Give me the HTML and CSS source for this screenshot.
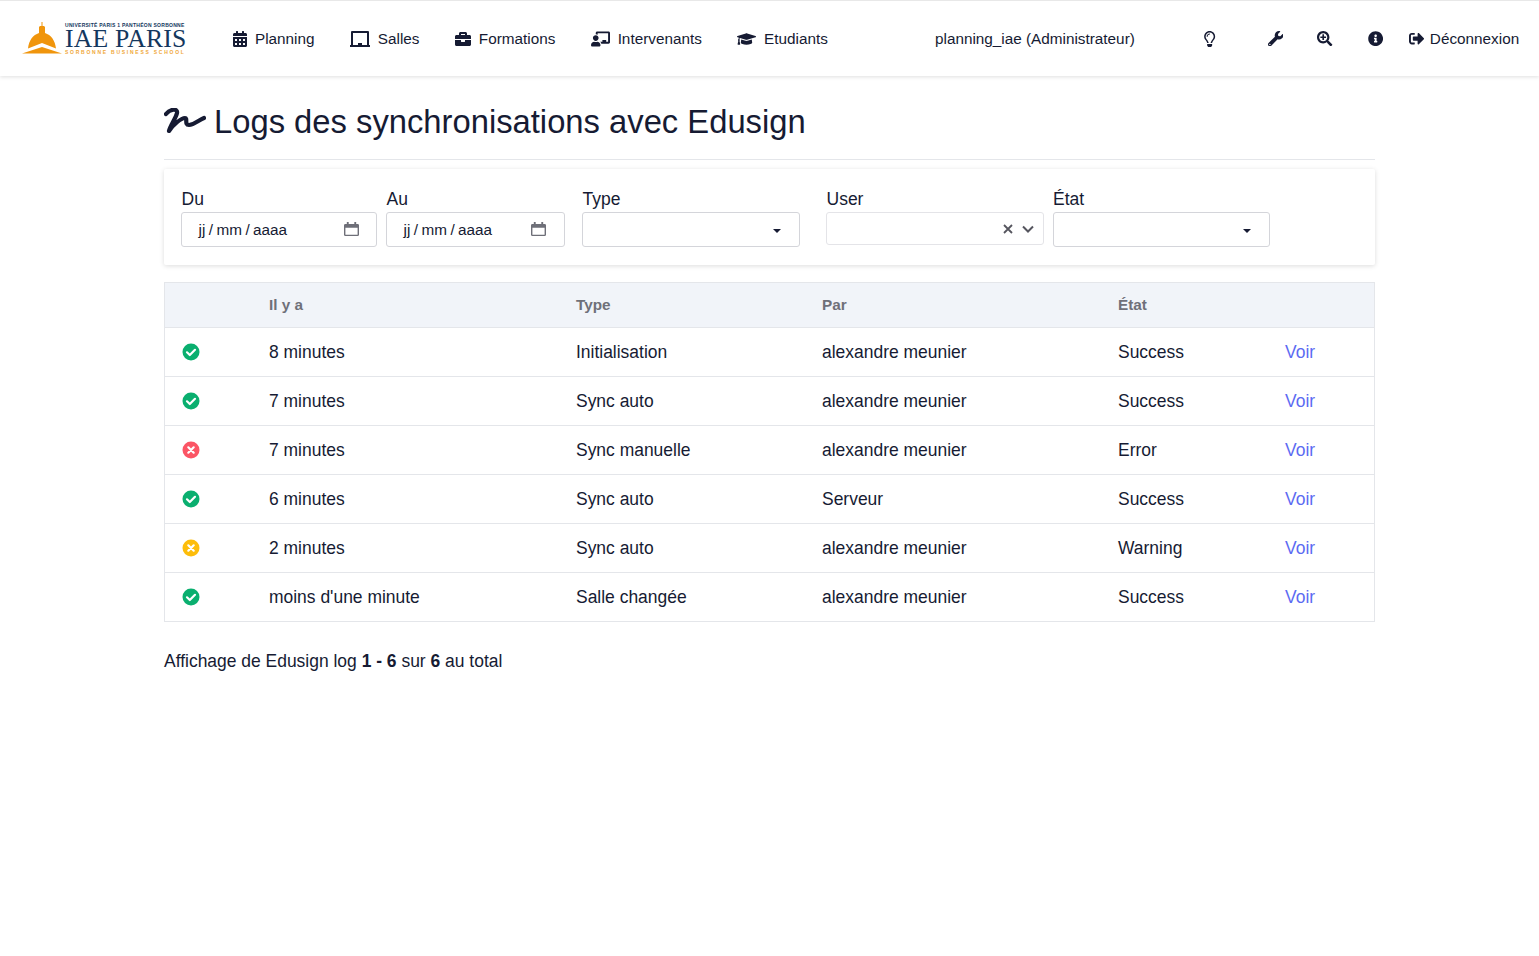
FILE: index.html
```html
<!DOCTYPE html>
<html lang="fr">
<head>
    <meta charset="UTF-8">
    <title>Logs des synchronisations avec Edusign</title>
    <link rel="stylesheet" href="styles.css">
</head>
<body>
    <nav class="navbar">
        <a class="brand" href="#">
            <svg class="brand-dome" viewBox="0 0 40 32">
                <path fill="#f0950c" d="M19.500 0h1v4h1.500l1 1v6c6 2 10 7 11 15.500L20 21 6 26.500C7 18 11 13 17 11V5l1-1h1.500z"/>
                <path fill="#f0950c" d="M0 31.500 20 25l20 6.500z"/>
            </svg>
            <span class="brand-text">
                <span class="brand-top">UNIVERSITÉ PARIS 1 PANTHÉON SORBONNE</span>
                <span class="brand-name">IAE PARIS</span>
                <span class="brand-sub">SORBONNE BUSINESS SCHOOL</span>
            </span>
        </a>
        <div class="nav-main">
            <a class="nav-item" href="#">
                <svg class="ico" viewBox="0 0 448 512"><path d="M0 464c0 26.500 21.500 48 48 48h352c26.500 0 48-21.500 48-48V192H0v272zm320-196c0-6.600 5.400-12 12-12h40c6.600 0 12 5.400 12 12v40c0 6.600-5.400 12-12 12h-40c-6.600 0-12-5.400-12-12v-40zm0 128c0-6.600 5.400-12 12-12h40c6.600 0 12 5.400 12 12v40c0 6.600-5.400 12-12 12h-40c-6.600 0-12-5.400-12-12v-40zM192 268c0-6.600 5.400-12 12-12h40c6.600 0 12 5.400 12 12v40c0 6.600-5.400 12-12 12h-40c-6.600 0-12-5.400-12-12v-40zm0 128c0-6.600 5.400-12 12-12h40c6.600 0 12 5.400 12 12v40c0 6.600-5.400 12-12 12h-40c-6.600 0-12-5.400-12-12v-40zM64 268c0-6.600 5.400-12 12-12h40c6.600 0 12 5.400 12 12v40c0 6.600-5.400 12-12 12H76c-6.600 0-12-5.400-12-12v-40zm0 128c0-6.600 5.400-12 12-12h40c6.600 0 12 5.400 12 12v40c0 6.600-5.400 12-12 12H76c-6.600 0-12-5.400-12-12v-40zM400 64h-48V16c0-8.800-7.200-16-16-16h-32c-8.800 0-16 7.200-16 16v48H160V16c0-8.800-7.200-16-16-16h-32c-8.800 0-16 7.200-16 16v48H48C21.500 64 0 85.500 0 112v48h448v-48c0-26.500-21.500-48-48-48z"/></svg>
                Planning
            </a>
            <a class="nav-item" href="#">
                <svg class="ico ico-board" viewBox="0 0 20 16"><path d="M2 0h16a1 1 0 0 1 1 1v13h1v2H0v-2h1V1a1 1 0 0 1 1-1zm1 2v12h5v-2h4v2h5V2H3z"/></svg>
                Salles
            </a>
            <a class="nav-item" href="#">
                <svg class="ico ico-case" viewBox="0 0 512 512"><path d="M320 336c0 8.840-7.160 16-16 16h-96c-8.840 0-16-7.160-16-16v-48H0v144c0 25.600 22.400 48 48 48h416c25.600 0 48-22.400 48-48V288H320v48zm144-208h-80V80c0-25.600-22.400-48-48-48H176c-25.600 0-48 22.400-48 48v48H48c-25.600 0-48 22.400-48 48v80h512v-80c0-25.600-22.400-48-48-48zm-144 0H192V96h128v32z"/></svg>
                Formations
            </a>
            <a class="nav-item" href="#">
                <svg class="ico ico-wide" viewBox="0 0 640 512"><path d="M208 352c-2.390 0-4.780.35-7.060 1.090C187.980 357.300 174.350 360 160 360c-14.350 0-27.980-2.700-40.950-6.910-2.280-.74-4.660-1.090-7.050-1.090C49.940 352-.33 402.480 0 464.620.14 490.880 21.730 512 48 512h224c26.270 0 47.860-21.120 48-47.380.33-62.140-49.940-112.620-112-112.620zm-48-32c53.020 0 96-42.980 96-96s-42.980-96-96-96-96 42.980-96 96 42.980 96 96 96zM592 0H208c-26.470 0-48 22.250-48 49.590V96c23.420 0 45.100 6.780 64 17.800V64h352v288h-64v-64H384v64h-76.240c19.100 16.690 33.120 38.730 39.690 64H592c26.470 0 48-22.250 48-49.590V49.590C640 22.250 618.470 0 592 0z"/></svg>
                Intervenants
            </a>
            <a class="nav-item" href="#">
                <svg class="ico ico-wide" viewBox="0 0 640 512"><path d="M622.340 153.200 343.490 67.520c-15.160-4.670-31.820-4.670-46.990 0L17.660 153.200c-23.540 7.230-23.540 38.360 0 45.590l48.610 14.940c-10.670 13.190-17.230 29.280-17.880 46.900C38.780 266.150 32 276.110 32 288c0 10.780 5.680 19.850 13.860 25.650L20.330 428.530C18.110 438.520 25.710 448 35.940 448h56.110c10.240 0 17.840-9.480 15.620-19.470L82.140 313.650C90.320 307.850 96 298.780 96 288c0-11.570-6.470-21.250-15.660-26.870.76-15.020 8.440-28.300 20.690-36.720L296.500 284.500c9.060 2.780 26.440 6.250 46.990 0l278.860-85.700c23.550-7.240 23.550-38.360-.01-45.600zM352.790 315.090c-28.530 8.760-52.840 3.920-65.590 0l-145.020-44.550L128 384c0 35.350 85.960 64 192 64s192-28.650 192-64l-14.180-113.470-145.030 44.560z"/></svg>
                Etudiants
            </a>
        </div>
        <div class="nav-user">planning_iae (Administrateur)</div>
        <div class="nav-end">
            <a class="nav-icon nav-bulb" href="#">
                <svg class="ico" viewBox="0 0 352 512"><path d="M176 80c-52.940 0-96 43.060-96 96 0 8.840 7.160 16 16 16s16-7.160 16-16c0-35.300 28.720-64 64-64 8.840 0 16-7.160 16-16s-7.160-16-16-16zM96.060 459.170c0 3.150.93 6.220 2.680 8.840l24.510 36.840c2.970 4.460 7.970 7.140 13.320 7.140h78.850c5.360 0 10.360-2.680 13.320-7.140l24.510-36.840c1.740-2.620 2.670-5.700 2.680-8.840l.05-43.180H96.020l.04 43.180zM176 0C73.720 0 0 82.970 0 176c0 44.370 16.450 84.850 43.560 115.780 16.640 18.990 42.740 58.800 52.420 92.160v.06h48v-.12c-.01-4.770-.72-9.510-2.150-14.070-5.590-17.810-22.82-64.770-62.170-109.670-20.540-23.430-31.520-53.150-31.610-84.140-.2-73.640 59.670-128 127.950-128 70.580 0 128 57.420 128 128 0 30.970-11.240 60.850-31.650 84.140-39.110 44.610-56.420 91.470-62.100 109.460-1.460 4.620-2.190 9.410-2.200 14.200v.2h48v-.05c9.680-33.370 35.780-73.180 52.420-92.160C335.550 260.850 352 220.370 352 176 352 78.800 273.200 0 176 0z"/></svg>
            </a>
            <a class="nav-icon nav-wrench" href="#">
                <svg class="ico" viewBox="0 0 512 512"><path d="M507.730 109.100c-2.240-9.030-13.540-12.090-20.120-5.510l-74.360 74.360-67.880-11.310-11.310-67.880 74.360-74.360c6.620-6.620 3.430-17.900-5.660-20.160-47.380-11.740-99.550.91-136.580 37.930-39.640 39.640-50.550 97.100-34.050 147.200L18.740 402.760c-24.990 24.990-24.990 65.510 0 90.500 24.990 24.990 65.510 24.990 90.500 0l213.210-213.210c50.120 16.710 107.470 5.680 147.370-34.220 37.070-37.070 49.700-89.320 37.910-136.730zM64 472c-13.250 0-24-10.750-24-24 0-13.260 10.750-24 24-24s24 10.740 24 24c0 13.250-10.750 24-24 24z"/></svg>
            </a>
            <a class="nav-icon nav-zoom" href="#">
                <svg class="ico" viewBox="0 0 512 512"><path d="M304 192v32c0 6.600-5.400 12-12 12h-56v56c0 6.600-5.400 12-12 12h-32c-6.600 0-12-5.400-12-12v-56h-56c-6.600 0-12-5.400-12-12v-32c0-6.600 5.400-12 12-12h56v-56c0-6.600 5.400-12 12-12h32c6.600 0 12 5.400 12 12v56h56c6.600 0 12 5.400 12 12zm201 284.700L476.700 505c-9.400 9.400-24.600 9.400-33.900 0L343 405.300c-4.500-4.500-7-10.600-7-17V372c-35.300 27.600-79.700 44-128 44C93.100 416 0 322.900 0 208S93.100 0 208 0s208 93.100 208 208c0 48.300-16.400 92.700-44 128h16.300c6.400 0 12.500 2.500 17 7l99.700 99.700c9.300 9.400 9.300 24.600 0 34zM344 208c0-75.200-60.800-136-136-136S72 132.800 72 208s60.800 136 136 136 136-60.800 136-136z"/></svg>
            </a>
            <a class="nav-icon nav-info" href="#">
                <svg class="ico" viewBox="0 0 512 512"><path d="M256 8C119.040 8 8 119.080 8 256c0 136.990 111.040 248 248 248s248-111.010 248-248C504 119.080 392.960 8 256 8zm0 110c23.200 0 42 18.800 42 42s-18.800 42-42 42-42-18.800-42-42 18.800-42 42-42zm56 254c0 6.630-5.370 12-12 12h-88c-6.630 0-12-5.370-12-12v-24c0-6.630 5.370-12 12-12h12v-64h-12c-6.630 0-12-5.370-12-12v-24c0-6.630 5.370-12 12-12h64c6.630 0 12 5.370 12 12v100h12c6.630 0 12 5.370 12 12v24z"/></svg>
            </a>
            <a class="nav-item nav-logout" href="#">
                <svg class="ico" viewBox="0 0 512 512"><path d="M497 273 329 441c-15 15-41 4.500-41-17v-96H152c-13.300 0-24-10.700-24-24v-96c0-13.300 10.700-24 24-24h136V88c0-21.400 25.900-32 41-17l168 168c9.300 9.400 9.300 24.600 0 34zM192 436v-40c0-6.600-5.400-12-12-12H96c-17.700 0-32-14.300-32-32V160c0-17.700 14.300-32 32-32h84c6.600 0 12-5.400 12-12V76c0-6.600-5.400-12-12-12H96c-53 0-96 43-96 96v192c0 53 43 96 96 96h84c6.600 0 12-5.400 12-12z"/></svg>
                Déconnexion
            </a>
        </div>
    </nav>

    <main class="container">
        <h1 class="page-title">
            <svg class="title-logo" viewBox="0 0 42 28">
                <path d="M2 6C6 1 14 0 13 5 12 10 6 18 5 23 9 17 17 10 21 10 24 10 20 17 25 17 30 17 35 12 40 10"/>
            </svg>
            Logs des synchronisations avec Edusign
        </h1>

        <form class="filters">
            <div class="field field-du">
                <label>Du</label>
                <div class="input date-input">
                    <span>jj / mm / aaaa</span>
                    <svg class="cal" viewBox="0 0 16 16"><path d="M3 0h2v2h6V0h2v2h1.500A1.500 1.500 0 0 1 16 3.500v10a1.500 1.500 0 0 1-1.500 1.500h-13A1.500 1.500 0 0 1 0 13.500v-10A1.500 1.500 0 0 1 1.500 2H3V0zM1.500 6v7.500h13V6h-13z"/></svg>
                </div>
            </div>
            <div class="field field-au">
                <label>Au</label>
                <div class="input date-input">
                    <span>jj / mm / aaaa</span>
                    <svg class="cal" viewBox="0 0 16 16"><path d="M3 0h2v2h6V0h2v2h1.500A1.500 1.500 0 0 1 16 3.500v10a1.500 1.500 0 0 1-1.500 1.500h-13A1.500 1.500 0 0 1 0 13.500v-10A1.500 1.500 0 0 1 1.500 2H3V0zM1.500 6v7.500h13V6h-13z"/></svg>
                </div>
            </div>
            <div class="field field-type">
                <label>Type</label>
                <div class="input select-input"><i class="caret"></i></div>
            </div>
            <div class="field field-user">
                <label>User</label>
                <div class="input combo-input">
                    <svg class="combo-x" viewBox="0 0 10 10"><path d="M1 1l8 8M9 1l-8 8"/></svg>
                    <svg class="combo-chev" viewBox="0 0 12 8"><path d="M1 1.500l5 5 5-5"/></svg>
                </div>
            </div>
            <div class="field field-etat">
                <label>État</label>
                <div class="input select-input"><i class="caret"></i></div>
            </div>
        </form>

        <table class="logs">
            <thead>
                <tr><th class="col-icon"></th><th class="col-ago">Il y a</th><th class="col-type">Type</th><th class="col-par">Par</th><th class="col-etat">État</th><th></th></tr>
            </thead>
            <tbody>
                <tr>
                    <td><svg class="status ok" viewBox="0 0 18 18"><circle cx="9" cy="9" r="8.500"/><path d="M5 9.300l2.800 2.700L13 6.800"/></svg></td>
                    <td>8 minutes</td><td>Initialisation</td><td>alexandre meunier</td><td>Success</td><td><a href="#">Voir</a></td>
                </tr>
                <tr>
                    <td><svg class="status ok" viewBox="0 0 18 18"><circle cx="9" cy="9" r="8.500"/><path d="M5 9.300l2.800 2.700L13 6.800"/></svg></td>
                    <td>7 minutes</td><td>Sync auto</td><td>alexandre meunier</td><td>Success</td><td><a href="#">Voir</a></td>
                </tr>
                <tr>
                    <td><svg class="status err" viewBox="0 0 18 18"><circle cx="9" cy="9" r="8.500"/><path d="M6.300 6.300l5.400 5.400M11.700 6.300l-5.400 5.400"/></svg></td>
                    <td>7 minutes</td><td>Sync manuelle</td><td>alexandre meunier</td><td>Error</td><td><a href="#">Voir</a></td>
                </tr>
                <tr>
                    <td><svg class="status ok" viewBox="0 0 18 18"><circle cx="9" cy="9" r="8.500"/><path d="M5 9.300l2.800 2.700L13 6.800"/></svg></td>
                    <td>6 minutes</td><td>Sync auto</td><td>Serveur</td><td>Success</td><td><a href="#">Voir</a></td>
                </tr>
                <tr>
                    <td><svg class="status warn" viewBox="0 0 18 18"><circle cx="9" cy="9" r="8.500"/><path d="M6.300 6.300l5.400 5.400M11.700 6.300l-5.400 5.400"/></svg></td>
                    <td>2 minutes</td><td>Sync auto</td><td>alexandre meunier</td><td>Warning</td><td><a href="#">Voir</a></td>
                </tr>
                <tr>
                    <td><svg class="status ok" viewBox="0 0 18 18"><circle cx="9" cy="9" r="8.500"/><path d="M5 9.300l2.800 2.700L13 6.800"/></svg></td>
                    <td>moins d'une minute</td><td>Salle changée</td><td>alexandre meunier</td><td>Success</td><td><a href="#">Voir</a></td>
                </tr>
            </tbody>
        </table>

        <p class="pager-info">Affichage de Edusign log <b>1 - 6</b> sur <b>6</b> au total</p>
    </main>
</body>
</html>
```
FILE: styles.css
```css
:root {
    --text: #161b33;
    --border: #e4e6ea;
    --input-border: #d4d5da;
    --link: #5c6bf2;
}

* {
    box-sizing: border-box;
}

body {
    margin: 0;
    background: #fff;
    color: var(--text);
    font-family: "Liberation Sans", Arial, sans-serif;
    font-size: 17.470px;
}

a {
    color: inherit;
    text-decoration: none;
}

/* Barre de navigation */
.navbar {
    display: flex;
    align-items: center;
    height: 76px;
    border-top: 1px solid #e8e8e8;
    box-shadow: 0 1px 4px rgba(0, 0, 0, 0.13);
    font-size: 15.300px;
}

.brand {
    display: flex;
    align-items: center;
    width: 233px;
    margin-top: -1px;
    padding-left: 22px;
    flex-shrink: 0;
}

.brand-dome {
    width: 40px;
    height: 32px;
}

.brand-text {
    display: flex;
    flex-direction: column;
    margin-left: 3px;
    white-space: nowrap;
}

.brand-top {
    font-size: 5px;
    font-weight: 700;
    color: #14375e;
    line-height: 6px;
    letter-spacing: 0.27px;
}

.brand-name {
    font-family: "Liberation Serif", serif;
    font-size: 25.700px;
    line-height: 21px;
    color: #14375e;
    letter-spacing: 0.2px;
}

.brand-sub {
    font-size: 5px;
    font-weight: 700;
    line-height: 6px;
    color: #f0a83a;
    letter-spacing: 1.750px;
}

.nav-main {
    display: flex;
    width: 702px;
    gap: 35.300px;
}

.nav-item {
    display: flex;
    align-items: center;
    gap: 8px;
}

.ico {
    width: 14px;
    height: 16px;
    fill: var(--text);
    flex-shrink: 0;
}

.ico-board {
    width: 20px;
}

.ico-case {
    width: 16px;
}

.ico-wide {
    width: 19px;
}

.nav-user {
    width: 256px;
}

.nav-end {
    display: flex;
    align-items: center;
}

.nav-end .ico {
    width: 15.300px;
    height: 15.300px;
}

.nav-end .nav-bulb .ico {
    height: 16px;
}

.nav-icon {
    display: flex;
}

.nav-bulb {
    margin-left: 11.300px;
}

.nav-wrench {
    margin-left: 50.400px;
}

.nav-zoom {
    margin-left: 34px;
}

.nav-info {
    margin-left: 35px;
}

.nav-logout {
    margin-left: 26px;
    gap: 5.700px;
}

/* Contenu */
.container {
    width: 1211px;
    margin: 0 auto;
}

.page-title {
    display: flex;
    align-items: center;
    gap: 8px;
    margin: 0;
    height: 84px;
    padding-top: 9px;
    border-bottom: 1px solid var(--border);
    font-size: 32.750px;
    font-weight: 400;
}

.title-logo {
    width: 42px;
    height: 28px;
    fill: none;
    stroke: var(--text);
    stroke-width: 4.200;
    stroke-linecap: round;
    stroke-linejoin: round;
}

.filters {
    display: flex;
    height: 96px;
    margin-top: 9px;
    padding: 16px 0 0 17px;
    border-radius: 2px;
    box-shadow: 0 1px 5px rgba(0, 0, 0, 0.14);
}

.field label {
    display: block;
    height: 27px;
    line-height: 28px;
    padding-left: 0.500px;
    font-size: 17.500px;
}

.field-du { width: 205px; }
.field-au { width: 196px; }
.field-type { width: 244px; }
.field-user { width: 227px; }
.field-etat { width: 217px; }

.field-du .input { width: 196px; }
.field-au .input { width: 179px; }
.field-type .input { width: 218px; }
.field-user .input { width: 218px; }
.field-etat .input { width: 217px; }

.field-etat label {
    padding-left: 0;
}

.input {
    display: flex;
    align-items: center;
    height: 35px;
    border: 1px solid var(--input-border);
    border-radius: 3px;
    background: #fff;
}

.date-input {
    justify-content: space-between;
    padding: 0 17px 0 16.500px;
    font-size: 15.300px;
    word-spacing: -0.800px;
}

.field-au .date-input {
    padding-right: 18px;
}

.cal {
    width: 15px;
    height: 15px;
    fill: #6e6f78;
}

.select-input {
    justify-content: flex-end;
    padding-right: 18px;
}

.caret {
    width: 0;
    height: 0;
    margin-top: 2px;
    border-left: 4.500px solid transparent;
    border-right: 4.500px solid transparent;
    border-top: 4.500px solid var(--text);
}

.combo-input {
    height: 33px;
    border-color: #e4e4e8;
    justify-content: flex-end;
    padding-right: 9px;
    gap: 9px;
}

.combo-x {
    width: 10px;
    height: 10px;
    stroke: #55555e;
    stroke-width: 1.800;
    fill: none;
}

.combo-chev {
    width: 12px;
    height: 8px;
    stroke: #55555e;
    stroke-width: 2;
    fill: none;
}

/* Tableau */
.logs {
    width: 100%;
    margin-top: 17px;
    border-collapse: collapse;
    border: 1px solid var(--border);
    table-layout: fixed;
}

.logs th {
    height: 45px;
    padding: 0 0 0 18px;
    background: #f1f4f9;
    color: #6f7079;
    font-size: 15.300px;
    font-weight: 700;
    text-align: left;
}

.logs td {
    height: 49px;
    padding: 0 0 0 18px;
    border-top: 1px solid var(--border);
}

.col-icon { width: 86.500px; }
.col-ago { width: 307px; }
.col-type { width: 246px; }
.col-par { width: 296px; }
.col-etat { width: 167px; }

.logs a {
    color: var(--link);
}

.status {
    display: block;
    width: 18px;
    height: 18px;
    margin: -1px 0 0 -1px;
}

.status path {
    fill: none;
    stroke: #fff;
    stroke-width: 2.200;
    stroke-linecap: round;
    stroke-linejoin: round;
}

.status.ok circle { fill: #0aaf6f; }
.status.err circle { fill: #fb5565; }
.status.warn circle { fill: #fdbd0a; }

.pager-info {
    margin: 28px 0 0;
    line-height: 22px;
}
```
